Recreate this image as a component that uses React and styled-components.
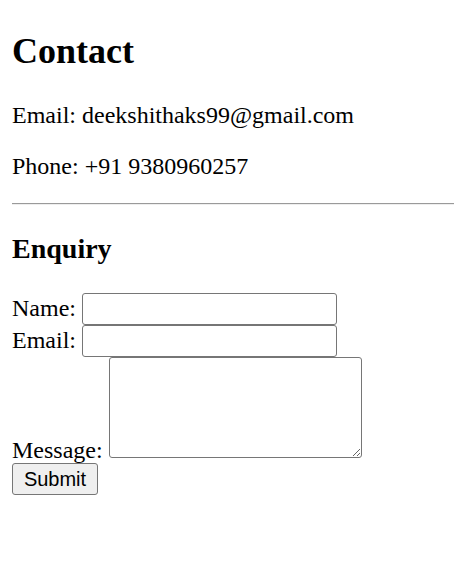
import React from 'react';
import styled, { createGlobalStyle } from 'styled-components';

const GlobalStyle = createGlobalStyle`
    html, body {
        margin: 0;
        padding: 0;
        background: #ffffff;
    }
`

const Page = styled.div`
    padding: 30px 0 40px 12px;
    font-family: "Liberation Serif", "Times New Roman", serif;
    font-size: 24px;
    color: #000000;
`

const Title = styled.h2`
    margin: 0 0 30px;
    font-size: 36px;
    font-weight: bold;
`

const Info = styled.p`
    margin: 0 0 24px;
`

const Rule = styled.hr`
    height: 0;
    margin: -1px 0 0 0;
    border: none;
    border-top: 1px solid #9a9a9a;
    border-bottom: 1px solid #eeeeee;
`

const SubTitle = styled.h3`
    margin: 28px 0;
    font-size: 28px;
    font-weight: bold;
`

const FieldRow = styled.div`
    display: block;
    margin-top: ${props => props.pull ? '-1px' : '0'};
`

const Field = styled.input`
    box-sizing: border-box;
    width: 255px;
    height: 32px;
    padding: 1px 3px;
    border: 1px solid #767676;
    border-radius: 3px;
    font-family: "Liberation Sans", Arial, sans-serif;
    font-size: 20px;
    background: #ffffff;
`

const MessageBox = styled.textarea`
    box-sizing: border-box;
    width: 253px;
    height: 101px;
    margin: 0;
    padding: 3px;
    border: 1px solid #767676;
    border-radius: 3px;
    font-family: "Liberation Mono", monospace;
    font-size: 20px;
    background: #ffffff;
`

const SubmitButton = styled.button`
    box-sizing: border-box;
    width: 86px;
    height: 32px;
    padding: 0;
    border: 1px solid #767676;
    border-radius: 3px;
    background-color: #efefef;
    color: #000000;
    font-family: "Liberation Sans", Arial, sans-serif;
    font-size: 20px;
`

const App = () => {
    return (
        <>
            <GlobalStyle />
            <Page>
                <Title>Contact</Title>
                <Info>Email: deekshithaks99@gmail.com</Info>
                <Info>Phone: +91 9380960257</Info>
                <Rule />
                <SubTitle>Enquiry</SubTitle>
                <form onSubmit={(e) => e.preventDefault()}>
                    <FieldRow>
                        Name: <Field type="text" name="name" />
                    </FieldRow>
                    <FieldRow>
                        Email: <Field type="email" name="email" />
                    </FieldRow>
                    <FieldRow>
                        Message: <MessageBox name="message" />
                    </FieldRow>
                    <FieldRow pull>
                        <SubmitButton type="submit">Submit</SubmitButton>
                    </FieldRow>
                </form>
            </Page>
        </>
    )
}

export default App;
